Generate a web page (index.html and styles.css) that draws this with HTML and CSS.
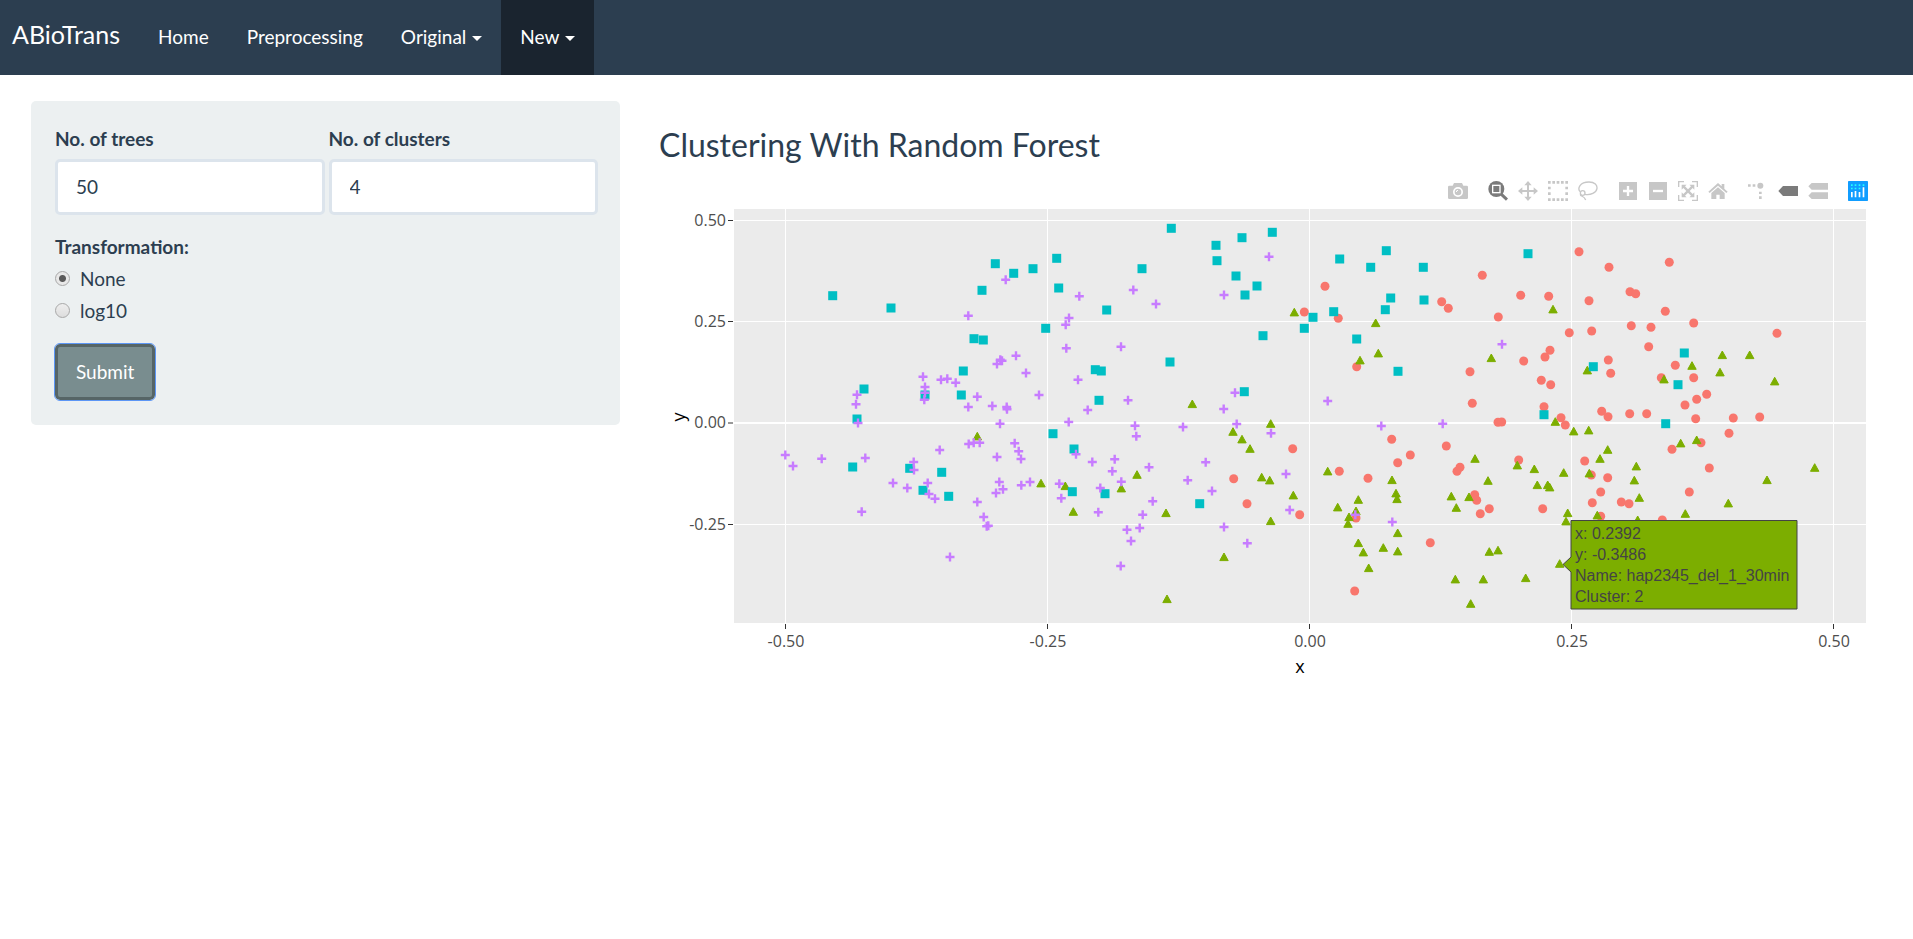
FILE: index.html
```html
<!DOCTYPE html>
<html lang="en">
<head>
<meta charset="utf-8">
<title>ABioTrans</title>
<link rel="stylesheet" href="styles.css">
</head>
<body>
<nav class="navbar">
  <a class="brand" href="#">ABioTrans</a>
  <a class="nav-item" href="#">Home</a>
  <a class="nav-item" href="#">Preprocessing</a>
  <a class="nav-item" href="#">Original<span class="caret"></span></a>
  <a class="nav-item active" href="#">New<span class="caret"></span></a>
</nav>
<main class="layout">
  <form class="well">
    <div class="fields">
      <div class="field">
        <label class="label" for="trees">No. of trees</label>
        <input class="control" id="trees" type="number" value="50">
      </div>
      <div class="field">
        <label class="label" for="clusters">No. of clusters</label>
        <input class="control" id="clusters" type="number" value="4">
      </div>
    </div>
    <fieldset class="options">
      <legend class="label">Transformation:</legend>
      <label class="option"><input class="radio" type="radio" name="transform" checked>None</label>
      <label class="option"><input class="radio" type="radio" name="transform">log10</label>
    </fieldset>
    <button class="submit" type="button">Submit</button>
  </form>
  <section class="content">
    <h2 class="title">Clustering With Random Forest</h2>
    <div class="modebar">
      <div class="group">
        <button class="tool" type="button" aria-label="Download plot as a png"><svg viewBox="0 0 60 60"><path fill-rule="evenodd" d="M4 14H14L18 6H42L46 14H56Q60 14 60 18V50Q60 54 56 54H4Q0 54 0 50V18Q0 14 4 14ZM30 18A15 15 0 1 0 30 48A15 15 0 1 0 30 18Z"/><circle cx="30" cy="33" r="10"/><path d="M25 33a5 5 0 0 1 5-5" fill="none" stroke="#fff" stroke-width="3"/></svg></button>
      </div>
      <div class="group">
        <button class="tool on" type="button" aria-label="Zoom"><svg viewBox="0 0 60 60"><circle cx="25" cy="24" r="24"/><path d="M38 38L57 56" stroke="currentColor" stroke-width="9"/><rect x="14" y="13" width="22" height="22" fill="none" stroke="#fff" stroke-width="4"/></svg></button>
        <button class="tool" type="button" aria-label="Pan"><svg viewBox="0 0 60 60"><path d="M30 0L41 13H33V27H47V19L60 30L47 41V33H33V47H41L30 60L19 47H27V33H13V41L0 30L13 19V27H27V13H19Z"/></svg></button>
        <button class="tool" type="button" aria-label="Box Select"><svg viewBox="0 0 60 60"><path d="M0 0h8v8H0zM13 0h8v8h-8zM26 0h8v8h-8zM39 0h8v8h-8zM52 0h8v8h-8zM0 52h8v8H0zM13 52h8v8h-8zM26 52h8v8h-8zM39 52h8v8h-8zM52 52h8v8h-8zM0 17h8v8H0zM0 34h8v8H0zM52 17h8v8h-8zM52 34h8v8h-8z"/></svg></button>
        <button class="tool" type="button" aria-label="Lasso Select"><svg viewBox="0 0 60 60"><g fill="none" stroke="currentColor" stroke-width="4"><path d="M6 32C-2 22 5 3 33 3C51 3 58 13 57 22C55 36 38 43 20 40"/><circle cx="14" cy="36" r="7"/><path d="M7 40C8 48 18 43 23 57"/></g></svg></button>
      </div>
      <div class="group">
        <button class="tool" type="button" aria-label="Zoom in"><svg viewBox="0 0 60 60"><path d="M3 3H57V57H3Z"/><path d="M15 30H45M30 15V45" stroke="#fff" stroke-width="7"/></svg></button>
        <button class="tool" type="button" aria-label="Zoom out"><svg viewBox="0 0 60 60"><path d="M3 3H57V57H3Z"/><path d="M15 30H45" stroke="#fff" stroke-width="7"/></svg></button>
        <button class="tool" type="button" aria-label="Autoscale"><svg viewBox="0 0 60 60"><path d="M2 18V2H18M42 2H58V18M58 42V58H42M18 58H2V42" fill="none" stroke="currentColor" stroke-width="4"/><path d="M11 11H26L21 16L30 25L39 16L34 11H49V26L44 21L35 30L44 39L49 34V49H34L39 44L30 35L21 44L26 49H11V34L16 39L25 30L16 21L11 26Z"/></svg></button>
        <button class="tool" type="button" aria-label="Reset axes"><svg viewBox="0 0 60 60"><path d="M30 6L41 16V9H49V23L59 32L55 36L30 14L5 36L1 32Z"/><path d="M30 19L50 36V54H35V41H25V54H10V36Z"/></svg></button>
      </div>
      <div class="group">
        <button class="tool" type="button" aria-label="Toggle Spike Lines"><svg viewBox="0 0 60 60"><path d="M0 10h8v7H0zM14 10h8v7h-8zM33 32h8v7h-8zM33 46h8v8h-8z"/><circle cx="37" cy="14" r="9"/></svg></button>
        <button class="tool on" type="button" aria-label="Show closest data on hover"><svg viewBox="0 0 60 60"><path d="M1 30L15 15H60V45H15Z"/></svg></button>
        <button class="tool" type="button" aria-label="Compare data on hover"><svg viewBox="0 0 60 60"><path d="M1 16L11 6H60V26H11ZM1 44L11 34H60V54H11Z"/></svg></button>
      </div>
      <div class="group">
        <a class="tool" href="#" aria-label="Produced with Plotly"><svg viewBox="0 0 60 60"><rect width="60" height="60" rx="2" fill="#119dff"/><path d="M9 20h5v5H9zM9 10h5v5H9zM20 10h5v5h-5zM20 20h5v5h-5zM32 10h5v5h-5zM32 20h5v5h-5zM44 10h5v5h-5z" fill="#25fefd"/><path d="M9 33h5v16H9zM20 30h5v19h-5zM32 33h5v16h-5zM44 19h5v30h-5z" fill="#fff"/></svg></a>
      </div>
    </div>
    <svg class="plot" viewBox="659 202 1223 480" role="img" aria-label="Scatter plot of clusters">
      <defs>
        <circle id="c1" r="4.5" fill="#f8766d"/>
        <path id="c2" d="M0-4L4.2 3.6H-4.2Z" fill="#7cae00" stroke="#7cae00" stroke-linejoin="round"/>
        <rect id="c3" x="-4.5" y="-4.5" width="9" height="9" fill="#00bfc4"/>
        <path id="c4" d="M-4.5 0H4.5M0-4.5V4.5" stroke="#c77cff" stroke-width="2.4"/>
      </defs>
      <rect x="734" y="208" width="1132" height="414" fill="#ebebeb"/>
      <path class="grid" d="M734 219.5H1866M734 320.5H1866M734 523.5H1866M785.5 208V622M1047.5 208V622M1309.5 208V622M1571.5 208V622M1833.5 208V622"/>
      <path class="zero" d="M734 422H1866"/>
      <path class="ticks" d="M728 219.5H733M728 320.5H733M728 422H733M728 523.5H733M785.5 623V628M1047.5 623V628M1309.5 623V628M1571.5 623V628M1833.5 623V628"/>
      <g class="tick-y"><text x="726" y="225">0.50</text><text x="726" y="326">0.25</text><text x="726" y="427">0.00</text><text x="726" y="529">-0.25</text></g>
      <g class="tick-x"><text x="786" y="646">-0.50</text><text x="1048" y="646">-0.25</text><text x="1310" y="646">0.00</text><text x="1572" y="646">0.25</text><text x="1834" y="646">0.50</text></g>
      <text class="axis-title" x="1300" y="672">x</text>
      <text class="axis-title" transform="translate(685 416) rotate(-90)">y</text>
      <g id="points"></g>
      <path d="M1563 563.5L1571 556V519.5H1797V608H1571V571Z" fill="#7cae00" stroke="#444"/>
      <g class="hover"><text x="1575" y="538">x: 0.2392</text><text x="1575" y="559">y: -0.3486</text><text x="1575" y="580">Name: hap2345_del_1_30min</text><text x="1575" y="601">Cluster: 2</text></g>
    </svg>
  </section>
</main>
<script src="plot.js"></script>
</body>
</html>
```
FILE: styles.css
```css
* { box-sizing: border-box; }
body { margin: 0; background: #fff; color: #2c3e50; font: 19px/27px Lato, sans-serif; }
.navbar { display: flex; height: 75px; background: #2c3e50; }
.brand { padding: 21px 19px 0 12px; color: #fff; font-size: 25px; text-decoration: none; }
.nav-item { display: flex; align-items: center; padding: 0 19px 2px; color: #fff; text-decoration: none; }
.nav-item.active { background: #1a242f; }
.caret { margin: 4px 0 0 6px; border: 5px solid transparent; border-top-color: #fff; border-bottom: 0; }
.layout { display: grid; grid-template-columns: 589fr 1223fr; gap: 39px; align-items: start; padding: 26px 31px 0; }
.well { padding: 24px 22px 25px 24px; border-radius: 5px; background: #ecf0f1; }
.fields { display: grid; grid-template-columns: 1fr 1fr; gap: 4px; }
.label { display: block; padding: 0; margin-bottom: 7px; font-weight: 700; }
.control { display: block; width: 100%; height: 56px; padding: 0 18px 2px; border: 3px solid #dce4ec; border-radius: 5px; background: #fff; color: #2c3e50; font: inherit; appearance: textfield; }
.control::-webkit-inner-spin-button { appearance: none; margin: 0; }
.options { margin: 18px 0 0; padding: 0; border: 0; }
.options .label { margin-bottom: 5px; }
.option { display: flex; align-items: center; gap: 10px; margin-bottom: 5px; }
.radio { width: 15px; height: 15px; margin: 0; appearance: none; border: 1px solid #a8a8a8; border-radius: 50%; background: linear-gradient(#eee, #ddd); }
.radio:checked { background: radial-gradient(circle, #5a5a5a 3px, #e8e8e8 4px); }
.submit { display: block; height: 56px; margin-top: 15px; padding: 0 18px 1px; border: 3px solid #566566; border-radius: 5px; outline: 1px solid #5c96f5; background: #798d8f; color: #fff; font: inherit; }
.title { margin: 25px 0 0; font-size: 32px; font-weight: 400; line-height: 38px; }
.modebar { display: flex; justify-content: flex-end; gap: 20px; padding: 17px 14px 2px 0; }
.group { display: flex; gap: 10px; }
.tool { display: block; width: 20px; height: 20px; padding: 0; border: 0; background: none; color: #c7c7c7; }
.tool.on { color: #7b7b7b; }
.tool svg { display: block; width: 20px; height: 20px; fill: currentColor; }
.plot { display: block; width: 100%; height: auto; font-family: "Open Sans", sans-serif; }
.grid { stroke: #fff; }
.zero { stroke: #fff; stroke-width: 2; }
.ticks { stroke: #333; }
.tick-x, .tick-y { font-size: 16px; fill: #4d4d4d; }
.tick-y { text-anchor: end; }
.tick-x, .axis-title { text-anchor: middle; }
.axis-title { font-size: 18px; fill: #000; }
.hover { font: 16px "Liberation Sans", Arial, sans-serif; fill: #444; }
```
FILE: plot.js
```js
// Marker positions per cluster, in tiles: [originX, originY, "x,y ..."], three units per plot unit.
const clusters = {
  c1: [
    [1290, 200, "105,256 43,333 145,352 455,302 475,322 577,223 692,283 776,286 625,348 867,152 838,395 780,448 765,468 701,480 540,512 547,607 200,497 754,538 782,551 762,617 813,650 826,672 624,664 635,663 897,299"],
    [1590, 200, "57,199 238,184 120,272 137,278 226,331 124,374 183,379 311,366 5,390 176,437 561,397 55,477 62,517 256,493 214,530 311,530 350,580 320,595 285,612 35,631 54,647 119,638 170,638 317,653 430,651 509,648"],
    [990, 420, "731,173 771,248"],
    [1290, 420, "8,83 148,151 234,172 305,55 323,125 361,102 469,75 510,139 501,151 686,117 554,221 560,238 598,263 571,278 758,263 29,281 198,291 421,365 194,510 884,120"],
    [1590, 420, "417,37 333,65 246,85 358,141 298,213 4,162 53,170 32,213 7,245 94,243 117,248 32,286 217,297"]
  ],
  c2: [
    [990, 200, "607,609 842,668"],
    [1290, 200, "13,334 257,366 265,457 210,478 604,471 789,325 796,662 892,508"],
    [1590, 200, "397,462 479,462 390,514 306,494 222,535 554,541"],
    [660, 420, "952,46"],
    [990, 420, "153,187 226,195 250,272 441,161 394,202 528,276 531,534 702,408 729,32 756,55 780,83 815,169 839,178 842,300"],
    [1290, 420, "10,223 113,151 143,259 205,236 198,270 177,288 174,308 306,177 318,217 321,234 323,336 323,391 280,380 205,366 220,394 236,441 484,226 499,260 537,228 555,113 594,179 682,133 733,144 821,155 742,192 773,192 779,199 833,276 828,301 598,392 624,388 496,475 580,475 707,471 542,548 809,428 851,31 896,28"],
    [1590, 420, "272,67 320,57 53,86 30,113 139,136 133,178 148,230 531,177 674,140 415,247 286,278 22,283 143,297 -2,157"]
  ],
  c3: [
    [660, 200, "518,284 693,321 966,268 942,413 970,417 910,510 904,582 795,582 612,564 591,654"],
    [990, 200, "16,188 71,217 129,203 200,172 206,261 544,82 456,203 350,327 167,382 678,133 681,179 756,110 847,94 738,225 801,255 765,282 819,404 540,483 316,506 334,510 327,598 763,572"],
    [1290, 200, "149,174 242,199 289,149 400,199 402,297 302,291 286,326 131,332 69,349 43,382 200,414 324,511 714,158 762,641"],
    [1590, 200, "283,456 10,497 264,551 227,668"],
    [660, 420, "578,138 749,142 845,154 789,208 866,226"],
    [990, 420, "189,38 252,84 247,212 345,218 629,248"]
  ],
  c4: [
    [660, 200, "925,344 789,527 795,558 795,575 793,596 843,536 862,533 887,545 952,587 925,618 591,581 588,610 594,666"],
    [990, 200, "47,236 268,286 430,267 498,309 702,282 837,167 237,351 227,371 229,442 393,437 78,464 21,489 31,476 36,479 108,516 264,536 147,582 7,615 50,618 51,625 293,627 414,598 30,668 236,663 435,674 579,678 735,575 701,624 740,669"],
    [1290, 200, "636,430 113,600 274,675 458,668"],
    [660, 420, "376,102 399,135 485,113 616,111 839,87 761,123 762,147 699,186 742,201 803,186 807,219 825,233 605,272 952,243 971,288 980,316 985,314 870,408 926,69 941,65 959,65"],
    [990, 420, "74,67 86,91 93,114 21,108 28,183 39,205 18,216 94,193 120,183 208,188 214,232 258,100 307,123 374,115 367,151 394,182 331,201 325,274 477,139 439,46 488,241 458,281 449,321 411,326 423,360 392,435 593,178 647,124 666,210 702,318 772,367 843,37 888,159 899,267"],
    [1290, 420, "196,281 307,303"]
  ]
};

const layer = document.getElementById("points");
for (const [shape, tiles] of Object.entries(clusters)) {
  for (const [originX, originY, list] of tiles) {
    for (const pair of list.split(" ")) {
      const [x, y] = pair.split(",").map(Number);
      const mark = document.createElementNS("http://www.w3.org/2000/svg", "use");
      mark.setAttribute("href", "#" + shape);
      mark.setAttribute("x", (originX + x / 3).toFixed(1));
      mark.setAttribute("y", (originY + y / 3).toFixed(1));
      layer.append(mark);
    }
  }
}
```
